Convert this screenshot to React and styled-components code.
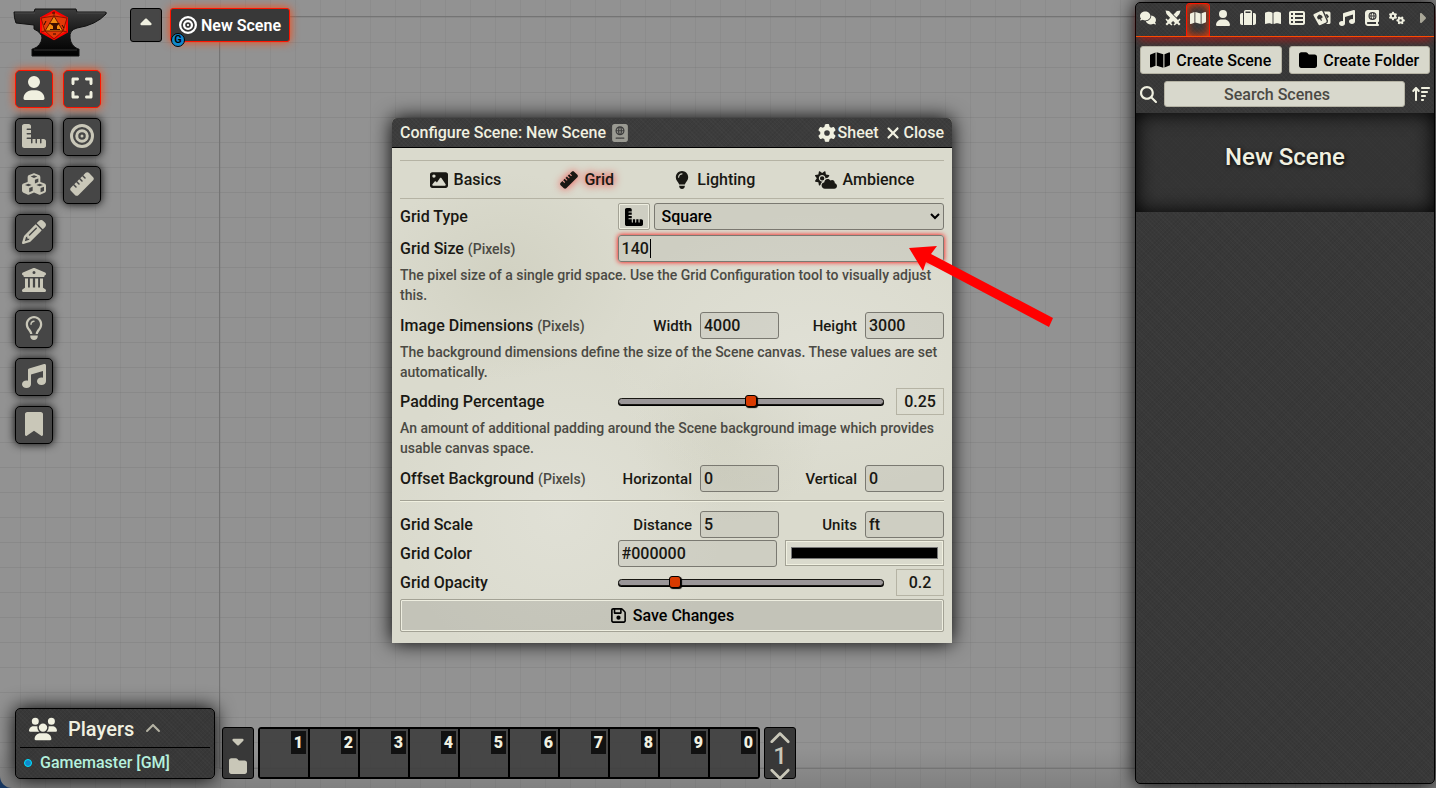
import React, { useEffect, useRef } from 'react'
import styled, { createGlobalStyle, css } from 'styled-components'
import {
    FaUser, FaExpand, FaRulerCombined, FaBullseye, FaCubes, FaRuler, FaPencil,
    FaBuildingColumns, FaRegLightbulb, FaMusic, FaBookmark, FaCaretUp, FaCaretDown,
    FaCaretRight, FaFolder, FaChevronUp, FaChevronDown, FaUsers, FaComments, FaMap,
    FaSuitcase, FaBookOpen, FaTableList, FaBookAtlas, FaGears, FaMagnifyingGlass,
    FaArrowUpWideShort, FaPassport, FaGear, FaXmark, FaImage, FaLightbulb,
    FaCloudSun, FaRegFloppyDisk
} from 'react-icons/fa6'

const GlobalStyle = createGlobalStyle`
    * {
        box-sizing: border-box;
    }

    body {
        margin: 0;
        background: #16365f;
        font-family: Roboto, "Liberation Sans", sans-serif;
        font-size: 16px;
        font-weight: 500;
        color: #191813;
    }

    button, input, select {
        font: inherit;
        margin: 0;
    }

    button {
        cursor: pointer;
    }

    svg {
        display: block;
        flex: none;
    }
`

const denim = css`
    background-color: rgba(52, 52, 52, 0.95);
    background-image:
        repeating-linear-gradient(45deg, rgba(255, 255, 255, 0.02) 0 1px, transparent 1px 3px),
        repeating-linear-gradient(-45deg, rgba(0, 0, 0, 0.05) 0 1px, transparent 1px 3px);
`

const SwordsIcon = () => (
    <svg width="16" height="16" viewBox="0 0 32 32" fill="currentColor">
        <path d="M1 1l7 1 18 18 3-3 2 2-4 5 4 4-3 3-4-4-5 4-2-2 3-3L3 8z" />
        <path d="M31 1l-7 1-7 7 6 6 6-7zM12 14l-6 6-3-3-2 2 4 5-4 4 3 3 4-4 5 4 2-2-3-3 6-6z" />
    </svg>
)

const CardsIcon = () => (
    <svg width="18" height="16" viewBox="0 0 36 32" fill="currentColor">
        <path fillRule="evenodd" d="M2 8L15 2q3-1 4 1l8 18q1 3-1 4l-11 5q-3 1-4-1L1 11q-1-2 1-3zM12 9q-5 4-3 8 2 3 5 1l2 4 2-1-2-4q4 0 3-4-1-3-7-4z" />
        <path fillRule="evenodd" d="M22 3h10q3 0 3 3v19q0 3-3 3h-6q5-3 4-7zM28 8l4 5-3 4-4-8z" />
    </svg>
)

const Anvil = () => (
    <svg width="96" height="50" viewBox="0 0 96 50">
        <defs>
            <linearGradient id="iron" x1="0" y1="0" x2="0" y2="1">
                <stop offset="0" stopColor="#3c3c3c" />
                <stop offset="0.5" stopColor="#171717" />
                <stop offset="1" stopColor="#000" />
            </linearGradient>
        </defs>
        <path d="M1 4h20l1-3h41l1 3h28q2 0 1 2Q83 17 64 20q-8 2-7 10 1 8 8 11h1v7H19v-7h1q8-3 9-11 0-5-8-9V17L3 15Q1 10 1 4z" fill="url(#iron)" stroke="#111" />
        <path d="M2 5h20M64 5h28" stroke="#4a4a4a" />
        <path d="M21 42h43" stroke="#333" />
        <path d="M41 3l13 7v14l-13 7-13-7V10z" fill="#e23a08" stroke="#f00" strokeWidth="2" />
        <path d="M41 8l9 15H32z" fill="#f08a10" stroke="#6b1a00" />
        <path d="M41 3v5M54 10l-13-2-13 2 4 13-4 1M54 10l-4 13 4 1M32 23l9 8 9-8" fill="none" stroke="#8a1500" />
        <path d="M36 15h11l-3 3v3h3v1H37v-1h3v-3z" fill="#3a0d00" />
        <path d="M39 5h3M33 13l-2 4M49 17l2 3M40 26h3" stroke="#2a0800" />
    </svg>
)

const TOOLS = [
    [FaUser, FaExpand],
    [FaRulerCombined, FaBullseye],
    [FaCubes, FaRuler],
    [FaPencil],
    [FaBuildingColumns],
    [FaRegLightbulb],
    [FaMusic],
    [FaBookmark]
]

const SIDEBAR_TABS = [
    FaComments, SwordsIcon, FaMap, FaUser, FaSuitcase, FaBookOpen,
    FaTableList, CardsIcon, FaMusic, FaBookAtlas, FaGears, FaCaretRight
]

const SLOTS = [1, 2, 3, 4, 5, 6, 7, 8, 9, 0]

const SceneTools = () => (
    <Tools>
        {TOOLS.map((row, i) => (
            <ToolRow key={i}>
                {row.map((Icon, j) => (
                    <ToolButton key={j} type="button" $active={i === 0}>
                        <Icon size={24} />
                    </ToolButton>
                ))}
            </ToolRow>
        ))}
    </Tools>
)

const Players = () => (
    <PlayersPanel>
        <PlayersTitle>
            <FaUsers size={28} />
            Players
            <FaChevronUp size={16} color="#b5b3a4" />
        </PlayersTitle>
        <Player>
            <Dot />
            Gamemaster [GM]
        </Player>
    </PlayersPanel>
)

const Hotbar = () => (
    <Bar>
        <BarControls>
            <BarButton type="button"><FaCaretDown size={18} /></BarButton>
            <BarButton type="button"><FaFolder size={18} /></BarButton>
        </BarControls>
        <Slots>
            {SLOTS.map((n) => (
                <Slot key={n}><SlotKey>{n}</SlotKey></Slot>
            ))}
        </Slots>
        <BarControls>
            <BarButton type="button"><FaChevronUp size={22} /></BarButton>
            <PageNumber>1</PageNumber>
            <BarButton type="button"><FaChevronDown size={22} /></BarButton>
        </BarControls>
    </Bar>
)

const Sidebar = () => (
    <SidebarPanel>
        <SidebarTabs>
            {SIDEBAR_TABS.map((Icon, i) => (
                <SidebarTab key={i} type="button" $active={i === 2} $dim={i === 11}>
                    <Icon size={16} />
                </SidebarTab>
            ))}
        </SidebarTabs>
        <DirectoryHeader>
            <DirectoryRow>
                <CreateButton type="button"><FaMap size={20} />Create Scene</CreateButton>
                <CreateButton type="button"><FaFolder size={18} />Create Folder</CreateButton>
            </DirectoryRow>
            <DirectoryRow>
                <FaMagnifyingGlass size={17} />
                <Search type="search" placeholder="Search Scenes" aria-label="Search Scenes" />
                <FaArrowUpWideShort size={18} />
            </DirectoryRow>
        </DirectoryHeader>
        <SceneEntry>New Scene</SceneEntry>
    </SidebarPanel>
)

const SceneConfig = () => {
    const sizeInput = useRef(null)

    useEffect(() => {
        sizeInput.current.focus()
        sizeInput.current.setSelectionRange(3, 3)
    }, [])

    return (
        <Dialog>
            <DialogHeader>
                <DialogTitle>Configure Scene: New Scene</DialogTitle>
                <IdLink><FaPassport size={18} /></IdLink>
                <HeaderButton type="button"><FaGear size={18} />Sheet</HeaderButton>
                <HeaderButton type="button"><FaXmark size={18} />Close</HeaderButton>
            </DialogHeader>
            <Form onSubmit={(e) => e.preventDefault()}>
                <Tabs>
                    <Tab href="#basics"><FaImage size={18} />Basics</Tab>
                    <Tab href="#grid" $active><FaRuler size={18} />Grid</Tab>
                    <Tab href="#lighting"><FaLightbulb size={18} />Lighting</Tab>
                    <Tab href="#ambience"><FaCloudSun size={22} />Ambience</Tab>
                </Tabs>

                <Group $gap={4}>
                    <label htmlFor="grid-type">Grid Type</label>
                    <TypeFields>
                        <RulerButton type="button" aria-label="Grid configuration"><FaRulerCombined size={18} /></RulerButton>
                        <Select id="grid-type"><option>Square</option></Select>
                    </TypeFields>
                </Group>
                <Group $gap={5}>
                    <label htmlFor="grid-size">Grid Size <Unit>(Pixels)</Unit></label>
                    <SizeInput id="grid-size" ref={sizeInput} defaultValue="140" />
                </Group>
                <Hint>The pixel size of a single grid space. Use the Grid Configuration tool to visually adjust this.</Hint>

                <Group $gap={7}>
                    <span>Image Dimensions <Unit>(Pixels)</Unit></span>
                    <Pair>
                        <SubField>Width<Input defaultValue="4000" /></SubField>
                        <SubField>Height<Input defaultValue="3000" /></SubField>
                    </Pair>
                </Group>
                <Hint>The background dimensions define the size of the Scene canvas. These values are set automatically.</Hint>

                <Group $gap={6}>
                    <label htmlFor="padding">Padding Percentage</label>
                    <RangeFields>
                        <Range id="padding" type="range" min="0" max="0.5" step="0.05" defaultValue="0.25" />
                        <RangeValue>0.25</RangeValue>
                    </RangeFields>
                </Group>
                <Hint>An amount of additional padding around the Scene background image which provides usable canvas space.</Hint>

                <Group $gap={7}>
                    <span>Offset Background <Unit>(Pixels)</Unit></span>
                    <Pair>
                        <SubField>Horizontal<Input defaultValue="0" /></SubField>
                        <SubField>Vertical<Input defaultValue="0" /></SubField>
                    </Pair>
                </Group>
                <Divider />

                <Group $gap={0}>
                    <span>Grid Scale</span>
                    <Pair>
                        <SubField>Distance<Input defaultValue="5" /></SubField>
                        <SubField>Units<Input defaultValue="ft" /></SubField>
                    </Pair>
                </Group>
                <Group $gap={2}>
                    <label htmlFor="grid-color">Grid Color</label>
                    <ColorFields>
                        <Input id="grid-color" defaultValue="#000000" />
                        <Swatch type="color" defaultValue="#000000" aria-label="Grid color" />
                    </ColorFields>
                </Group>
                <Group $gap={2}>
                    <label htmlFor="opacity">Grid Opacity</label>
                    <RangeFields>
                        <Range id="opacity" type="range" min="0" max="1" step="0.05" defaultValue="0.2" />
                        <RangeValue>0.2</RangeValue>
                    </RangeFields>
                </Group>
                <Save type="submit"><FaRegFloppyDisk size={17} />Save Changes</Save>
            </Form>
        </Dialog>
    )
}

const App = () => {
    return (
        <>
        <GlobalStyle />
        <Board>
            <SceneBounds />
            <Main>
                <TopBar>
                    <Anvil />
                    <Nav>
                        <NavToggle type="button"><FaCaretUp size={18} /></NavToggle>
                        <NavScene href="#scene">
                            <FaBullseye size={18} />
                            New Scene
                            <Viewer>G</Viewer>
                        </NavScene>
                    </Nav>
                </TopBar>
                <SceneTools />
                <BottomBar>
                    <Players />
                    <Hotbar />
                </BottomBar>
            </Main>
            <Sidebar />
            <SceneConfig />
            <Arrow width="146" height="84" viewBox="0 0 146 84">
                <polygon points="0,3 28,1 22,9 144,73 140,82 17,17 14,26" fill="#f00" />
            </Arrow>
        </Board>
        </>
    )
}

const Board = styled.div`
    position: relative;
    display: flex;
    min-height: 100vh;
    overflow: hidden;
    border-bottom-left-radius: 12px;
    background-color: #929292;
    background-image:
        linear-gradient(to top, rgba(0, 0, 0, 0.12), transparent 40px),
        linear-gradient(to right, rgba(0, 0, 0, 0.04) 1px, transparent 1px),
        linear-gradient(to bottom, rgba(0, 0, 0, 0.06) 1px, transparent 1px);
    background-size: auto, 25px 25px, 25px 25px;
    background-position: 0 0, 20px 0, 0 17px;
`

const SceneBounds = styled.div`
    position: absolute;
    top: 16px;
    left: 219px;
    right: 215px;
    bottom: 19px;
    border: 1px solid #747474;
`

const Main = styled.main`
    position: relative;
    flex: 1;
    display: flex;
    flex-direction: column;
    padding: 8px 0 9px 15px;
`

const TopBar = styled.header`
    display: flex;
    gap: 21px;
    margin-left: -2px;
`

const Nav = styled.nav`
    display: flex;
    gap: 8px;
    height: 34px;
`

const NavToggle = styled.button`
    display: flex;
    justify-content: center;
    width: 32px;
    padding: 5px 0;
    border: 1px solid #000;
    border-radius: 3px;
    background: #464646;
    color: #f0f0e0;
`

const NavScene = styled.a`
    position: relative;
    display: flex;
    align-items: center;
    gap: 4px;
    padding: 0 8px;
    border: 1px solid #ff1400;
    border-radius: 3px;
    background: #383838;
    box-shadow: 0 0 10px #ff4810;
    color: #fff;
    font-weight: 600;
    text-decoration: none;
`

const Viewer = styled.span`
    position: absolute;
    left: 0;
    bottom: -6px;
    width: 14px;
    height: 14px;
    border: 1px solid #000;
    border-radius: 50%;
    background: #1188cc;
    color: #000;
    font-size: 11px;
    line-height: 12px;
    text-align: center;
`

const Tools = styled.div`
    flex: 1;
    display: flex;
    flex-direction: column;
    gap: 10px;
    padding-top: 12px;
`

const ToolRow = styled.div`
    display: flex;
    gap: 10px;
`

const ToolButton = styled.button`
    display: flex;
    align-items: center;
    justify-content: center;
    width: 38px;
    height: 38px;
    padding: 0 0 2px;
    border: 1px solid ${({ $active }) => ($active ? '#ff1400' : '#000')};
    border-radius: 5px;
    background: #464646;
    box-shadow: 0 0 10px ${({ $active }) => ($active ? '#ff4810' : '#000')};
    color: ${({ $active }) => ($active ? '#f0f0e0' : '#c9c7b8')};
`

const BottomBar = styled.footer`
    display: flex;
    align-items: flex-end;
    gap: 7px;
`

const PlayersPanel = styled.aside`
    ${denim}
    width: 200px;
    height: 71px;
    padding: 0 4px;
    border: 1px solid #000;
    border-radius: 5px;
    box-shadow: 0 0 20px #000;
    color: #f0f0e0;
`

const PlayersTitle = styled.h3`
    display: flex;
    align-items: center;
    gap: 11px;
    height: 39px;
    margin: 0;
    padding: 2px 9px 0;
    border-bottom: 1px solid #000;
    font-size: 20px;
    font-weight: 500;
`

const Player = styled.div`
    display: flex;
    align-items: center;
    gap: 8px;
    height: 29px;
    padding-left: 4px;
    color: #b5f0dd;
`

const Dot = styled.span`
    width: 8px;
    height: 8px;
    border: 1px solid #00e6ff;
    border-radius: 50%;
    background: #1188cc;
`

const Bar = styled.div`
    display: flex;
    gap: 4px;
    height: 52px;
`

const BarControls = styled.div`
    display: flex;
    flex-direction: column;
    align-items: center;
    justify-content: space-around;
    width: 32px;
    border: 1px solid #000;
    border-radius: 3px;
    background: rgba(52, 52, 52, 0.95);
    color: #c9c7b8;
`

const BarButton = styled.button`
    padding: 0;
    border: 0;
    background: none;
    color: inherit;
`

const PageNumber = styled.span`
    font-size: 24px;
    line-height: 12px;
`

const Slots = styled.ol`
    display: flex;
    margin: 0;
    padding: 0;
    border: 1px solid #000;
    border-radius: 3px;
    background: rgba(62, 62, 62, 0.9);
    list-style: none;
`

const Slot = styled.li`
    display: flex;
    justify-content: flex-end;
    align-items: flex-start;
    width: 50px;
    padding: 2px;
    border: 1px solid #000;
`

const SlotKey = styled.span`
    width: 15px;
    background: #111;
    color: #f0f0e0;
    font-weight: 900;
    line-height: 23px;
    text-align: center;
`

const SidebarPanel = styled.aside`
    ${denim}
    position: relative;
    width: 300px;
    margin: 2px 1px 4px 0;
    border: 1px solid #000;
    border-radius: 5px;
    box-shadow: 0 0 20px #000;
    color: #f0f0e0;
`

const SidebarTabs = styled.nav`
    display: flex;
    height: 34px;
    border-bottom: 1px solid #ff4a00;
    box-shadow: 0 6px 8px -3px rgba(255, 0, 0, 0.5);
`

const SidebarTab = styled.button`
    flex: 1;
    display: flex;
    align-items: center;
    justify-content: center;
    padding: 0 0 4px;
    border: 1px solid ${({ $active }) => ($active ? '#ff1400' : 'transparent')};
    border-bottom: 0;
    border-radius: 4px 4px 0 0;
    background: none;
    box-shadow: ${({ $active }) => ($active ? 'inset 0 0 8px #ff3c00' : 'none')};
    color: ${({ $dim }) => ($dim ? '#a9a798' : '#f0f0e0')};
`

const DirectoryHeader = styled.div`
    display: flex;
    flex-direction: column;
    gap: 7px;
    padding: 9px 4px 6px;
`

const DirectoryRow = styled.div`
    display: flex;
    align-items: center;
    gap: 7px;
`

const CreateButton = styled.button`
    flex: 1;
    display: flex;
    align-items: center;
    justify-content: center;
    gap: 6px;
    height: 28px;
    padding: 0;
    border: 1px solid #b5b3a4;
    border-radius: 3px;
    background: #d8d8cc;
    color: #000;
    white-space: nowrap;
`

const Search = styled.input`
    flex: 1;
    min-width: 0;
    height: 26px;
    padding: 0 4px;
    border: 1px solid #b5b3a4;
    border-radius: 3px;
    background: #d8d8cc;
    text-align: center;

    &::placeholder {
        color: #4b4a44;
    }
`

const SceneEntry = styled.a.attrs({ href: '#scene' })`
    display: block;
    height: 99px;
    background: rgba(50, 50, 50, 0.6);
    box-shadow: inset 0 0 20px #000;
    color: #f0f0e0;
    font-size: 24px;
    line-height: 89px;
    text-align: center;
    text-decoration: none;
    text-shadow: 1px 1px 4px #000;
`

const Dialog = styled.section`
    position: absolute;
    top: 118px;
    left: 392px;
    width: 560px;
    border-radius: 5px 5px 0 0;
    background-color: #dadacd;
    background-image:
        radial-gradient(ellipse at 20% 30%, rgba(190, 190, 170, 0.3), transparent 20%),
        radial-gradient(ellipse at 75% 45%, rgba(230, 230, 222, 0.5), transparent 35%),
        radial-gradient(ellipse at 30% 75%, rgba(230, 230, 222, 0.5), transparent 30%),
        radial-gradient(ellipse at 60% 60%, rgba(190, 190, 170, 0.25), transparent 20%);
    box-shadow: 0 0 20px #000;
`

const DialogHeader = styled.header`
    ${denim}
    display: flex;
    align-items: center;
    gap: 5px;
    height: 30px;
    padding: 0 8px;
    border-bottom: 1px solid #000;
    border-radius: 5px 5px 0 0;
    color: #f0f0e0;
`

const DialogTitle = styled.h4`
    margin: 0;
    font-size: 16px;
    font-weight: 500;
`

const IdLink = styled.span`
    margin-right: auto;
    color: #9a9a92;
`

const HeaderButton = styled.button`
    display: flex;
    align-items: center;
    gap: 2px;
    padding: 0;
    border: 0;
    background: none;
    color: inherit;
`

const Form = styled.form`
    padding: 12px 8px 11px;
`

const Tabs = styled.nav`
    display: flex;
    justify-content: space-around;
    height: 39px;
    border-top: 1px solid #b5b3a4;
    border-bottom: 1px solid #b5b3a4;
`

const Tab = styled.a`
    display: flex;
    align-items: center;
    gap: 6px;
    color: #191813;
    text-decoration: none;

    ${({ $active }) => $active && css`
        text-shadow: 0 0 8px #f00;

        svg {
            filter: drop-shadow(0 0 4px rgba(255, 0, 0, 0.7));
        }
    `}
`

const Group = styled.div`
    display: grid;
    grid-template-columns: 2fr 3fr;
    align-items: center;
    height: 27px;
    margin-top: ${({ $gap }) => $gap}px;
`

const Unit = styled.span`
    color: #4b4a44;
    font-size: 14px;
`

const Hint = styled.p`
    margin: 3px 0 0;
    color: #4b4a44;
    font-size: 14px;
    line-height: 20px;
`

const field = css`
    width: 100%;
    min-width: 0;
    height: 27px;
    border: 1px solid #7a7971;
    border-radius: 3px;
    background: rgba(0, 0, 0, 0.05);
    color: #191813;
`

const Input = styled.input`
    ${field}
    padding: 0 3px;

    &:focus {
        outline: none;
        box-shadow: 0 0 5px #f00;
    }
`

/* steady caret after the three digits instead of the blinking one */
const SizeInput = styled(Input)`
    caret-color: transparent;

    &:focus {
        background-image: linear-gradient(#000, #000);
        background-position: 31px center;
        background-size: 1px 19px;
        background-repeat: no-repeat;
    }
`

const Select = styled.select`
    ${field}
    padding: 0 3px;
    color: #000;
`

const TypeFields = styled.div`
    display: grid;
    grid-template-columns: 32px 1fr;
    gap: 4px;
`

const RulerButton = styled.button`
    display: flex;
    align-items: center;
    justify-content: center;
    padding: 0;
    border: 1px solid #a3a295;
    border-radius: 2px;
    background: rgba(0, 0, 0, 0.05);
    box-shadow: inset 0 0 0 1px #eeeee0;
    color: #000;
`

const Pair = styled.div`
    display: grid;
    grid-template-columns: 1fr 157px;
    gap: 8px;
`

const SubField = styled.label`
    display: flex;
    align-items: center;
    justify-content: flex-end;
    gap: 8px;
    font-size: 15px;

    input {
        width: 79px;
        font-size: 16px;
    }
`

const RangeFields = styled.div`
    display: grid;
    grid-template-columns: 1fr 48px;
    align-items: center;
    gap: 12px;
`

const Range = styled.input`
    appearance: none;
    width: 100%;
    height: 14px;
    background: none;

    &::-webkit-slider-runnable-track {
        height: 7px;
        border: 1px solid #191813;
        border-radius: 4px;
        background: #9a9698;
        box-shadow: 0 1px 0 #000;
    }

    &::-webkit-slider-thumb {
        appearance: none;
        width: 12px;
        height: 12px;
        margin-top: -4px;
        border: 1px solid #000;
        border-radius: 3px;
        background: #d93a00;
        box-shadow: 1px 1px 1px #000;
    }
`

const RangeValue = styled.output`
    height: 27px;
    border: 1px solid #b5b3a4;
    line-height: 25px;
    text-align: center;
`

const ColorFields = styled.div`
    display: grid;
    grid-template-columns: 1fr 1fr;
    gap: 8px;
`

const Swatch = styled.input`
    width: 100%;
    height: 26px;
    padding: 2px 3px;
    border: 1px solid #a3a295;
    background: transparent;
    box-shadow: inset 0 0 0 1px #f0f0e0;
`

const Divider = styled.hr`
    margin: 8px 0 9px;
    border: 0;
    border-top: 1px solid #a3a295;
    border-bottom: 1px solid #f0f0e0;
`

const Save = styled.button`
    display: flex;
    align-items: center;
    justify-content: center;
    gap: 6px;
    width: 100%;
    height: 33px;
    margin-top: 3px;
    border: 1px solid #a3a295;
    border-radius: 2px;
    background: rgba(0, 0, 0, 0.1);
    box-shadow: inset 0 0 0 1px #eeeee0;
    color: #000;
`

const Arrow = styled.svg`
    position: absolute;
    top: 245px;
    left: 909px;
`

export default App
